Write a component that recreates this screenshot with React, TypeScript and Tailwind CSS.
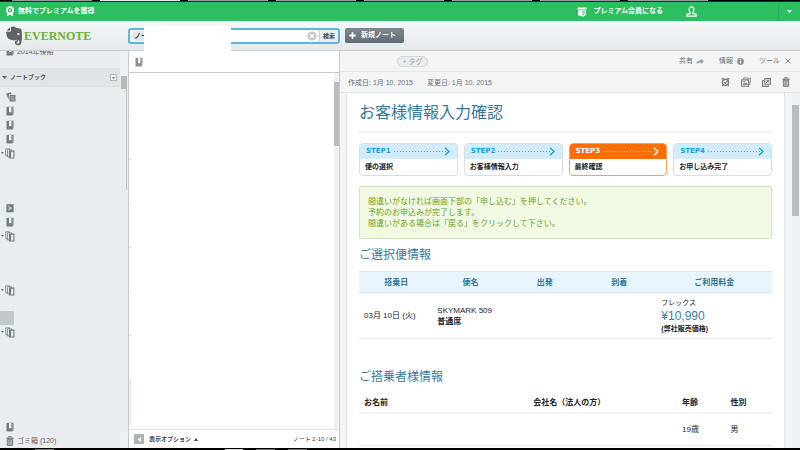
import { useState } from 'react'
import type { ReactNode } from 'react'
import clsx from 'clsx'

interface IconProps {
  className?: string
}

interface SidebarRowProps {
  icon?: ReactNode
  expandable?: boolean
  selected?: boolean
  label?: string
  children?: ReactNode
}

interface StepProps {
  name: string
  label: string
  active?: boolean
}

const steps: StepProps[] = [
  { name: 'STEP1', label: '便の選択' },
  { name: 'STEP2', label: 'お客様情報入力' },
  { name: 'STEP3', label: '最終確認', active: true },
  { name: 'STEP4', label: 'お申し込み完了' },
]

const browserTabs = [false, true, false, false, false, false, false, false]

/* ---------- Icons ---------- */

function RibbonIcon() {
  return (
    <svg width="10" height="11" viewBox="0 0 10 11" fill="none">
      <path d="M2.6 6 1.8 10.2 5 8.8 8.2 10.2 7.4 6" fill="#fff" />
      <circle cx="5" cy="4.2" r="3.1" fill="#2dbe60" stroke="#fff" strokeWidth="1.8" />
      <circle cx="5" cy="4.2" r="1" fill="#fff" />
    </svg>
  )
}

function PremiumIcon() {
  return (
    <svg width="10" height="10" viewBox="0 0 10 10">
      <path d="M.5.5h9v2h-9z" fill="#fff" />
      <path d="M1 3.2h8v4.4L6.5 9.8 1 8.2z" fill="#fff" />
      <path d="M5 4.6h3M5.4 6.2h2.8M5 7.8h2" stroke="#2dbe60" strokeWidth=".8" />
    </svg>
  )
}

function PersonIcon() {
  return (
    <svg width="11" height="11" viewBox="0 0 11 11" fill="none" stroke="#fff" strokeWidth="1.2">
      <path d="M4.3 6.6C3.4 5.8 3.1 4.6 3.2 3.4 3.3 1.8 4.2.8 5.5.8s2.2 1 2.3 2.6c.1 1.2-.2 2.4-1.1 3.2v.9l3.4.8c.3.6.4 1.2.3 1.9H.6C.5 9.5.6 8.9.9 8.3l3.4-.8z" />
    </svg>
  )
}

function ElephantLogo() {
  return (
    <svg width="18" height="20" viewBox="0 0 36 40" className="shrink-0">
      <path d="M3 9.5 10 2.6v5.600c0 .9-.5 1.400-1.400 1.400z" fill="#5f6365" />
      <path
        d="M12 2.500C13.500 1 17 .8 19.500 1.600c1.300.4 2 1.200 2.300 2.200 3.200 0 7.300.5 8.900 1.300 1.600.8 2.400 2.600 2.900 6.900.6 6.300.4 16.200-1.100 22-.9 3.300-2.600 4.300-6.100 4.300-4 0-6.600-1.700-6.600-5.100 0-3.300 2.300-5.200 6-5.200v3.300c-1.400 0-2.300.7-2.300 2 0 1.200.8 1.800 2.500 1.800 2 0 2.800-1 2.800-3 0-3.200-2.600-4.300-6.300-4.600-1 2-3.400 1.600-5.800 1.200-4.100-.6-9.300-1.500-11.200-4.600C3.400 20.300 2 14.800 2.400 11.600h6.900c2 0 2.800-1 2.800-2.800z"
        fill="#5f6365"
      />
      <path d="M24 17.500c.3-2.500 1.600-3.600 3.100-3.300 1.700.3 2.500 2 2.500 4-2-.9-3.700-1-5.600-.7z" fill="#eceff1" />
    </svg>
  )
}

function NotebookIcon({ className }: IconProps) {
  return (
    <svg width="8" height="10" viewBox="0 0 8 10" className={clsx('shrink-0', className)}>
      <path d="M1.500.5H8v8H1.500z" fill="currentColor" opacity=".5" />
      <path d="M.5 1h6.200v8.500H.5z" fill="currentColor" />
      <path d="M3 1h2.400v5.200H3z" fill="#f4f6f7" />
    </svg>
  )
}

function StackIcon() {
  return (
    <svg width="10" height="11" viewBox="0 0 10 11" className="shrink-0" fill="#e9edef" stroke="currentColor">
      <path d="M.6.8h4v6.800h-4z" strokeWidth=".9" opacity=".8" />
      <path d="M2.400 1.800h4.200v7.100H2.400z" strokeWidth=".9" opacity=".9" />
      <path d="M4.500 3.100h4.400v6.900H4.500z" strokeWidth="1.100" />
      <path d="M5.300 3v6.600" strokeWidth="1.600" />
    </svg>
  )
}

function AllNotesIcon() {
  return (
    <svg width="10" height="10" viewBox="0 0 10 10" className="shrink-0">
      <path d="M0 1.800 5 .3l.6 1.900H2.800v5.200z" fill="currentColor" />
      <path d="M3.500 3h6v6.500h-6z" fill="currentColor" />
      <path d="M4.700 4.600h3.600M4.700 6.200h3.600M4.700 7.800h3.600" stroke="#dfe4e6" strokeWidth=".5" />
    </svg>
  )
}

function SharedNotebookIcon() {
  return (
    <svg width="8" height="10" viewBox="0 0 8 10" className="shrink-0">
      <path d="M.5.8H8v8.400H.5z" fill="currentColor" opacity=".55" />
      <path d="M.5 1.500h6.400v7.700H.5z" fill="currentColor" />
      <path d="M2.200 3.500 5.600 5.200 2.400 7.200M2.400 5.200h2" stroke="#e9edef" strokeWidth=".8" fill="none" />
    </svg>
  )
}

function TrashIcon({ className }: IconProps) {
  return (
    <svg width="8" height="10" viewBox="0 0 8 10" fill="none" stroke="currentColor" className={clsx('shrink-0', className)}>
      <path d="M2.700 1.500V.6h2.600v.9" strokeWidth=".9" />
      <path d="M.3 2.200h7.400" strokeWidth="1.300" />
      <path d="M1.300 3.300h5.400v6H1.300z" strokeWidth="1" fill="currentColor" fillOpacity=".35" />
      <path d="M3.100 3.800v5M4.900 3.800v5" strokeWidth=".8" />
    </svg>
  )
}

function ShareArrowIcon() {
  return (
    <svg width="8" height="7" viewBox="0 0 8 7">
      <path d="M.3 6.200C.6 3.800 2 2.500 4.600 2.400V.8L7.800 3.500 4.600 6.100V4.400C2.700 4.300 1.300 4.900.3 6.200z" fill="#8f9598" />
    </svg>
  )
}

function InfoIcon() {
  return (
    <svg width="7" height="7" viewBox="0 0 7 7">
      <circle cx="3.500" cy="3.500" r="3.400" fill="#8f9598" />
      <path d="M3.500 3v2.600M3.500 1.300v1" stroke="#fff" strokeWidth="1.100" />
    </svg>
  )
}

function ReminderIcon() {
  return (
    <svg width="9" height="10" viewBox="0 0 9 10" fill="none" stroke="#777d80">
      <circle cx="4.500" cy="5.300" r="3.100" strokeWidth="1.400" />
      <path d="M.6 2.400 2.500 1M8.400 2.400 6.500 1M2 8l-.8 1.200M7 8l.8 1.200" strokeWidth="1.100" />
      <path d="M3 5.200 4.300 6.500 7.300 2.800" strokeWidth="1.100" />
    </svg>
  )
}

function PresentIcon() {
  return (
    <svg width="10" height="10" viewBox="0 0 10 10" fill="none" stroke="#777d80">
      <path d="M2.500 2 2.800.8 9.400 1.400 8.800 7.500 7.800 7.400" strokeWidth=".9" />
      <path d="M.6 2.900h7v6.300h-7z" strokeWidth="1.100" />
      <path d="M1.800 7.800 3.400 5.800l1.200 1 1-1.200 1 2.200z" fill="#777d80" strokeWidth=".4" />
      <path d="M2 4.600h2.600" strokeWidth=".8" />
    </svg>
  )
}

function CopyIcon() {
  return (
    <svg width="9" height="9" viewBox="0 0 9 9" fill="none" stroke="#777d80">
      <path d="M2.800.6h5.600v5.600H2.800z" strokeWidth="1.100" />
      <path d="M1.800 2.600H.6v5.800h5.800V7.200" strokeWidth="1.100" />
      <path d="M3.800 5.200 6.700 2.400M4.600 2.300h2.200v2.200" strokeWidth="1" />
    </svg>
  )
}

/* ---------- Sidebar ---------- */

function SidebarRow({ icon, expandable, selected, label, children }: SidebarRowProps) {
  return (
    <li className="relative h-[14px]">
      <a
        href="#"
        aria-label={label}
        className={clsx(
          'flex h-full items-center text-[#707b82]',
          selected ? 'w-[14px] bg-[#c1c8cd]' : expandable ? 'pl-[5px]' : 'pl-[6px]'
        )}
      >
        {expandable && (
          <svg width="3" height="2" viewBox="0 0 3 2" className="absolute left-[1px] top-[6px]">
            <path d="M0 0h3L1.500 2z" fill="#707b82" />
          </svg>
        )}
        {icon}
        {children}
      </a>
    </li>
  )
}

function Sidebar() {
  return (
    <nav className="flex w-[129px] shrink-0 border-r border-[#c6cacc] bg-[#e9edef]">
      <div className="flex min-w-0 flex-1 flex-col overflow-hidden">
        {/* Last row of the section above, scrolled half out of view */}
        <div className="flex h-[17px] shrink-0 items-start pl-[6px] text-[#707b82]">
          <NotebookIcon className="-mt-[5px]" />
          <span className="-mt-[4px] ml-[3px] text-[7px] leading-[10px] text-[#5b6062]">2014年後期</span>
        </div>
        <div className="flex h-[19px] shrink-0 items-center border-y border-[#dadfe1] bg-[#dfe4e6] pl-[2px] pr-[3px]">
          <svg width="5" height="3" viewBox="0 0 5 3">
            <path d="M0 0h5L2.500 3z" fill="#5f686d" />
          </svg>
          <h2 className="ml-[3px] flex-1 text-[6px] font-bold text-[#4f585d]">ノートブック</h2>
          <button type="button" aria-label="ノートブックの表示" className="grid h-[7px] w-[7px] place-items-center border border-[#b4babd] bg-[#f4f6f7]">
            <svg width="3" height="2" viewBox="0 0 3 2">
              <path d="M0 0h3L1.500 2z" fill="#5f686d" />
            </svg>
          </button>
        </div>
        <ul className="mt-[3px]">
          <SidebarRow label="すべてのノート" icon={<AllNotesIcon />} />
          <SidebarRow label="ノートブック" icon={<NotebookIcon />} />
          <SidebarRow label="ノートブック" icon={<NotebookIcon />} />
          <SidebarRow label="ノートブック" icon={<NotebookIcon />} />
          <SidebarRow label="スタック" expandable icon={<StackIcon />} />
        </ul>
        <ul className="mt-[41px]">
          <SidebarRow label="共有ノートブック" icon={<SharedNotebookIcon />} />
          <SidebarRow label="ノートブック" icon={<NotebookIcon />} />
          <SidebarRow label="スタック" expandable icon={<StackIcon />} />
        </ul>
        <ul className="mt-10">
          <SidebarRow label="スタック" expandable icon={<StackIcon />} />
        </ul>
        <ul className="mt-[14px]">
          <SidebarRow label="ノートブック" selected />
          <SidebarRow label="スタック" expandable icon={<StackIcon />} />
        </ul>
        <ul className="mt-auto">
          <SidebarRow label="ノートブック" icon={<NotebookIcon />} />
          <SidebarRow icon={<TrashIcon />}>
            <span className="ml-[3px] text-[7px] text-[#5b6062]">ゴミ箱 (120)</span>
          </SidebarRow>
        </ul>
      </div>
      <div className="flex w-2 flex-col">
        <div className="h-[25px] bg-[#f1f1f1]" />
        <div className="mx-[1px] h-[13px] bg-[#b9b9b9]" />
        <div className="mr-[1px] h-[101px] border-r border-[#c4c4c4]" />
        <div className="mt-auto h-4 bg-[#f1f1f1]" />
      </div>
    </nav>
  )
}

/* ---------- Note list ---------- */

function NoteList() {
  return (
    <section className="flex w-[211px] shrink-0 flex-col border-r border-[#c6cacc] bg-white">
      <div className="flex h-[22px] shrink-0 items-center border-b border-[#c9cbcc] pl-[6px] text-[#8f8f8f]">
        <NotebookIcon />
      </div>
      <div className="flex min-h-0 flex-1 overflow-hidden border-b border-[#e3e3e3]">
        <div className="w-[2px] pt-[42px]">
          {[0, 1, 2, 3, 4, 5].map((row) => (
            <div key={row} className="h-[44px] border-t border-[#dfe1e2]" />
          ))}
          <div className="h-[46px] bg-[#e6eaec]" />
        </div>
        <div className="ml-auto w-[5px] bg-[#f1f1f1] pt-[9px]">
          <div className="h-[64px] bg-[#bcbcbc]" />
        </div>
      </div>
      <div className="flex h-[18px] shrink-0 items-center pl-[5px] pr-[3px] text-[6px] text-[#3f4446]">
        <button type="button" aria-label="サイドバーを隠す" className="grid h-[10px] w-[10px] place-items-center bg-[#adb4b8]">
          <svg width="4" height="5" viewBox="0 0 4 5">
            <path d="M4 0v5L.5 2.500z" fill="#fff" />
          </svg>
        </button>
        <button type="button" className="ml-[5px] flex items-center gap-[3px] font-bold">
          表示オプション
          <svg width="4" height="3" viewBox="0 0 4 3">
            <path d="M0 3h4L2 0z" fill="#3f4446" />
          </svg>
        </button>
        <span className="ml-auto">ノート 2-10 / 43</span>
      </div>
    </section>
  )
}

/* ---------- Note content ---------- */

function Step({ name, label, active }: StepProps) {
  return (
    <li className={clsx('overflow-hidden rounded-[4px] border bg-white', active ? 'border-[#f2a25e]' : 'border-[#d9dee1]')}>
      <div
        className={clsx(
          'flex h-[15px] items-center gap-[3px] pl-[6px] pr-[7px]',
          active ? 'bg-[#ff6d05] text-white' : 'bg-[#d3ecfa] text-[#14a0dc]'
        )}
      >
        <span className="font-['DejaVu_Sans'] text-[7px] font-bold leading-[15px]">{name}</span>
        <svg height="9" className="min-w-0 flex-1" aria-hidden="true">
          <line x1="0" y1="4.500" x2="100%" y2="4.500" stroke="currentColor" strokeWidth="1" strokeDasharray="1 2" opacity=".8" />
        </svg>
        <svg width="6" height="9" viewBox="0 0 6 9" fill="none" className="-ml-[6px]">
          <path d="M1 .8 5 4.500 1 8.200" stroke="currentColor" strokeWidth="1.300" />
        </svg>
      </div>
      <p className="h-[16px] pl-[5px] text-[7px] font-bold leading-[15px] text-[#222]">{label}</p>
    </li>
  )
}

function FlightTable() {
  return (
    <table className="mt-[8px] w-full table-fixed border-collapse text-[8px] leading-[11px] text-[#222]">
      <colgroup>
        <col className="w-[18%]" />
        <col className="w-[18%]" />
        <col className="w-[18%]" />
        <col className="w-[18%]" />
        <col />
      </colgroup>
      <thead>
        <tr className="h-[21px] border-y border-[#dde6ea] bg-[#e9f5fc] text-[#337696]">
          <th>搭乗日</th>
          <th>便名</th>
          <th>出発</th>
          <th>到着</th>
          <th>ご利用料金</th>
        </tr>
      </thead>
      <tbody>
        <tr className="h-[46px] border-b border-[#e3e5e6]">
          <td className="pl-[5px]">03月 10日 (火)</td>
          <td className="pl-[4px]">
            SKYMARK 509
            <br />
            <b>普通席</b>
          </td>
          <td />
          <td />
          <td className="pl-[5px]">
            <p className="text-[7px] leading-[12px]">フレックス</p>
            <p className="text-[12px] leading-[14px] text-[#3a7fa3]">¥10,990</p>
            <p className="text-[7px] font-bold leading-[12px]">(弊社販売価格)</p>
          </td>
        </tr>
      </tbody>
    </table>
  )
}

function PassengerTable() {
  return (
    <table className="mt-[7px] w-full table-fixed border-collapse text-left text-[8px] leading-[11px] text-[#222]">
      <colgroup>
        <col className="w-[41%]" />
        <col className="w-[36%]" />
        <col />
        <col className="w-[11%]" />
      </colgroup>
      <thead>
        <tr className="h-[21px] border-b-2 border-[#f0f1f2]">
          <th className="pl-[5px]">お名前</th>
          <th className="pl-[5px]">会社名（法人の方）</th>
          <th className="pl-[5px]">年齢</th>
          <th className="pl-[4px]">性別</th>
        </tr>
      </thead>
      <tbody>
        <tr className="h-[32px] border-b border-[#e3e5e6]">
          <td />
          <td />
          <td className="pl-[5px]">19歳</td>
          <td className="pl-[4px]">男</td>
        </tr>
      </tbody>
    </table>
  )
}

function NoteContent() {
  return (
    <article className="mx-[6px] min-w-0 flex-1 overflow-hidden border-x border-[#e4e7e9] bg-white px-3">
      <h1 className="border-b-2 border-[#f0f1f2] pb-[6px] pt-[8px] text-[16px] leading-[24px] text-[#37799b]">お客様情報入力確認</h1>
      <ol className="mt-[10px] grid grid-cols-4 gap-[6px]">
        {steps.map((step) => (
          <Step key={step.name} {...step} />
        ))}
      </ol>
      <p className="mt-[10px] rounded-[2px] border border-[#d2e8b4] bg-[#f1f9e3] py-[9px] pl-[8px] text-[8px] leading-[11px] text-[#68a31f]">
        間違いがなければ画面下部の「申し込む」を押してください。
        <br />
        予約のお申込みが完了します。
        <br />
        間違いがある場合は「戻る」をクリックして下さい。
      </p>
      <h2 className="mt-[8px] text-[12px] leading-[16px] text-[#37799b]">ご選択便情報</h2>
      <FlightTable />
      <h2 className="mt-[30px] text-[12px] leading-[16px] text-[#37799b]">ご搭乗者様情報</h2>
      <PassengerTable />
    </article>
  )
}

function NotePane() {
  return (
    <section className="flex min-w-0 flex-1 flex-col bg-[#f3f4f6] text-[7px] text-[#6b7073]">
      <div className="flex h-[21px] shrink-0 items-center border-b border-[#e4e6e8] pl-[57px] pr-[9px]">
        <button type="button" className="h-[11px] w-[31px] rounded-full border border-[#cfd8dd] bg-[#e8edf0] leading-[9px] text-[#9fa7ab]">
          + タグ
        </button>
        <div className="ml-auto flex items-center gap-[15px]">
          <button type="button" className="flex items-center gap-[3px]">
            共有 <ShareArrowIcon />
          </button>
          <button type="button" className="flex items-center gap-[4px]">
            情報 <InfoIcon />
          </button>
          <button type="button" className="flex items-center gap-[5px]">
            ツール
            <svg width="6" height="6" viewBox="0 0 6 6" stroke="#85898c" strokeWidth="1">
              <path d="M.6.6 5.400 5.400M5.400.6.6 5.400" />
            </svg>
          </button>
        </div>
      </div>
      <div className="flex h-[21px] shrink-0 items-center border-b border-[#e4e6e8] pl-2 pr-[10px]">
        <span className="leading-[9px]">作成日: 1月 10, 2015</span>
        <span className="ml-[14px] leading-[9px]">変更日: 1月 10, 2015</span>
        <div className="ml-auto flex items-center gap-[11px]">
          <button type="button" aria-label="リマインダー"><ReminderIcon /></button>
          <button type="button" aria-label="プレゼンテーション"><PresentIcon /></button>
          <button type="button" aria-label="コピー"><CopyIcon /></button>
          <button type="button" aria-label="削除"><TrashIcon className="text-[#777d80]" /></button>
        </div>
      </div>
      <div className="flex min-h-0 flex-1">
        <NoteContent />
        <div className="w-[9px] shrink-0 bg-[#f1f1f1] px-[1px] pt-[12px]">
          <div className="h-[111px] bg-[#bcbcbc]" />
        </div>
      </div>
    </section>
  )
}

/* ---------- Header ---------- */

function PremiumBar() {
  return (
    <div className="flex h-[19px] shrink-0 items-center bg-[#2dbe60] pl-[5px] text-[7px] font-bold text-white">
      <a href="#" className="flex items-center gap-[3px]">
        <RibbonIcon />
        無料でプレミアムを獲得
      </a>
      <a href="#" className="ml-auto flex items-center gap-[6px]">
        <PremiumIcon />
        プレミアム会員になる
      </a>
      <button type="button" aria-label="アカウント" className="ml-[23px]">
        <PersonIcon />
      </button>
      <button type="button" aria-label="メニュー" className="ml-[81px] grid h-full w-[22px] place-items-center border-l border-[#27ad63]">
        <svg width="5" height="3" viewBox="0 0 5 3">
          <path d="M0 0h5L2.500 3z" fill="#fff" />
        </svg>
      </button>
    </div>
  )
}

function Toolbar() {
  const [query, setQuery] = useState('')

  return (
    <header className="flex h-[30px] shrink-0 items-center border-b border-[#c9cdcf] bg-linear-to-b from-[#f5f7f8] to-[#e5e9ec]">
      <a href="#" className="flex w-32 shrink-0 items-center gap-[1px] pl-[5px]">
        <ElephantLogo />
        <span className="font-['Liberation_Serif'] text-[12px] font-bold leading-[16px] text-[#69b131]">EVERNOTE</span>
      </a>
      <form className="relative flex h-4 w-[212px] rounded-[3px] border-2 border-[#5bb6dc] bg-white" onSubmit={(e) => e.preventDefault()}>
        <span className="my-[1px] ml-[1px] w-[28px] shrink-0 whitespace-nowrap rounded-full bg-[#dfe8ec] pl-[3px] text-[7px] font-bold leading-[10px] text-[#3f474b]">
          ノート
        </span>
        <input
          type="text"
          aria-label="ノートを検索"
          value={query}
          onChange={(e) => setQuery(e.target.value)}
          className="min-w-0 flex-1 bg-transparent text-[7px] outline-none"
        />
        <button type="button" aria-label="クリア" className="mr-[2px]">
          <svg width="10" height="10" viewBox="0 0 10 10">
            <circle cx="5" cy="5" r="4.600" fill="#c6c9cb" />
            <path d="M3.200 3.200 6.800 6.800M6.800 3.200 3.200 6.800" stroke="#fff" strokeWidth="1.300" />
          </svg>
        </button>
        <button type="submit" className="w-[19px] whitespace-nowrap border-l border-[#cdd1d3] bg-[#eceeef] text-center text-[6px] font-bold leading-3 text-[#3a3f42]">
          検索
        </button>
        {/* Blank suggestion panel hanging over the field */}
        <div className="absolute -top-1 left-[14px] h-[25px] w-[87px] bg-white" />
      </form>
      <button
        type="button"
        className="ml-[5px] flex h-[15px] w-[59px] items-center gap-[5px] rounded-[2px] bg-linear-to-b from-[#7d888e] to-[#626d74] pl-[4px] text-[7px] font-bold text-white"
      >
        <svg width="7" height="7" viewBox="0 0 7 7" stroke="#fff" strokeWidth="1.800">
          <path d="M3.500.3v6.400M.3 3.500h6.400" />
        </svg>
        新規ノート
      </button>
    </header>
  )
}

export default function App() {
  return (
    <div className="flex h-screen flex-col overflow-hidden bg-white font-['Liberation_Sans','Noto_Sans_CJK_JP',sans-serif]">
      <div className="flex h-[2px] shrink-0 gap-2 border-b border-[#2a2a2a] bg-black pl-3">
        {browserTabs.map((current, index) => (
          <div key={index} className={clsx('w-20', current ? 'bg-[#e4e4e4]' : 'bg-[#9a9a9a]')} />
        ))}
      </div>
      <PremiumBar />
      <Toolbar />
      <main className="flex min-h-0 flex-1">
        <Sidebar />
        <NoteList />
        <NotePane />
      </main>
      <div className="flex h-[2px] shrink-0 border-t border-black bg-black">
        <div className="ml-[35px] w-[19px] bg-[#777]" />
        <div className="ml-[171px] w-[18px] bg-[#ddd]" />
        <div className="ml-[13px] w-[19px] bg-[#777]" />
        <div className="ml-[13px] w-[19px] bg-[#777]" />
      </div>
    </div>
  )
}
